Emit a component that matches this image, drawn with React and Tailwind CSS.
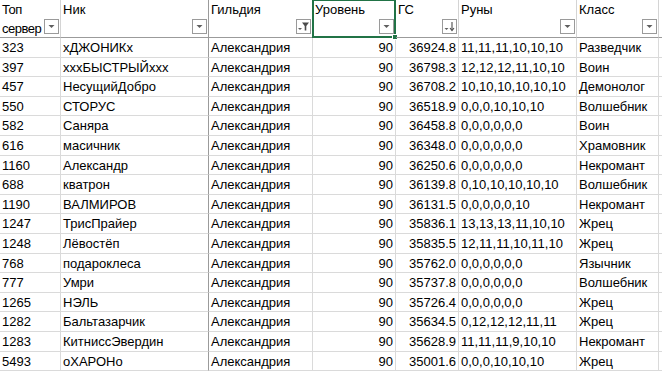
import React from 'react';

// строки таблицы
const rows = [
  ['323', 'хДЖОНИКх', '36924.8', '11,11,11,10,10,10', 'Разведчик'],
  ['397', 'хххБЫСТРЫЙххх', '36798.3', '12,12,12,11,10,10', 'Воин'],
  ['457', 'НесущийДобро', '36708.2', '10,10,10,10,10,10', 'Демонолог'],
  ['550', 'СТОРУС', '36518.9', '0,0,0,10,10,10', 'Волшебник'],
  ['582', 'Саняра', '36458.8', '0,0,0,0,0,0', 'Воин'],
  ['616', 'масичник', '36348.0', '0,0,0,0,0,0', 'Храмовник'],
  ['1160', 'Александр', '36250.6', '0,0,0,0,0,0', 'Некромант'],
  ['688', 'кватрон', '36139.8', '0,10,10,10,10,10', 'Волшебник'],
  ['1190', 'ВАЛМИРОВ', '36131.5', '0,0,0,0,0,10', 'Некромант'],
  ['1247', 'ТрисПрайер', '35836.1', '13,13,13,11,10,10', 'Жрец'],
  ['1248', 'Лёвостёп', '35835.5', '12,11,11,10,11,10', 'Жрец'],
  ['768', 'подароклеса', '35762.0', '0,0,0,0,0,0', 'Язычник'],
  ['777', 'Умри', '35737.8', '0,0,0,0,0,0', 'Волшебник'],
  ['1265', 'НЭЛЬ', '35726.4', '0,0,0,0,0,0', 'Жрец'],
  ['1282', 'Бальтазарчик', '35634.5', '0,12,12,12,11,11', 'Жрец'],
  ['1283', 'КитниссЭвердин', '35628.9', '11,11,11,9,10,10', 'Некромант'],
  ['5493', 'оХАРОНо', '35001.6', '0,0,0,10,10,10', 'Жрец'],
];

const FilterBtn = ({ kind = 'plain' }) => (
  <div className="absolute right-[1px] bottom-[3px] w-[15px] h-[15px] border border-[#9a9a9a] bg-white flex items-center justify-center">
    {kind === 'plain' && (
      <svg width="9" height="9" viewBox="0 0 9 9">
        <path d="M1.5 3 L7.5 3 L4.5 6 Z" fill="#5f5f5f" />
      </svg>
    )}
    {kind === 'filter' && (
      <svg width="13" height="13" viewBox="0 0 13 13">
        <path d="M1 8 L5 8 L3 10 Z" fill="#5f5f5f" />
        <path d="M5 2.5 L12 2.5 L9.3 6 L9.3 10.5 L7.7 10.5 L7.7 6 Z" fill="#4a4a4a" />
      </svg>
    )}
    {kind === 'sort' && (
      <svg width="13" height="13" viewBox="0 0 13 13">
        <path d="M1.5 8 L5.5 8 L3.5 10 Z" fill="#5f5f5f" />
        <path d="M9 2 L9 10" stroke="#4a4a4a" strokeWidth="1.1" />
        <path d="M7 8 L9 10.5 L11 8" stroke="#4a4a4a" strokeWidth="1.1" fill="none" />
      </svg>
    )}
  </div>
);

const Head = ({ children, kind, selected, dark, tight }) => (
  <div
    className={`relative h-[38px] border-b border-b-[#9b9b9b] border-r ${
      dark ? 'border-r-[#9b9b9b]' : 'border-r-[#d4d4d4]'
    } pl-[2px] pr-[17px] leading-[19px] ${tight ? 'tracking-[-0.5px]' : ''}`}
  >
    {children}
    {kind && <FilterBtn kind={kind} />}
    {selected && (
      <div className="absolute -left-[1px] -top-[1px] -right-[1px] -bottom-[1px] border-2 border-[#217346]">
        <div className="absolute -right-[4px] -bottom-[4px] w-[6px] h-[6px] bg-[#217346] border border-white" />
      </div>
    )}
  </div>
);

const Cell = ({ children, right, dark }) => (
  <div
    className={`h-[19.6px] leading-[19px] border-b border-b-[#dadada] border-r ${
      dark ? 'border-r-[#9b9b9b]' : 'border-r-[#dadada]'
    } ${right ? 'text-right pr-[2px]' : 'pl-[2px]'} whitespace-nowrap overflow-hidden`}
  >
    {children}
  </div>
);

export default function App() {
  return (
    <div
      className="w-[662px] h-[379px] overflow-hidden bg-white text-black text-[13px]"
      style={{ fontFamily: '"Liberation Sans", Arial, sans-serif' }}
    >
      <div className="grid grid-cols-[61px_148px_104px_83px_63px_118px_82px_1fr]">
        <Head kind="plain" tight>Топ сервер</Head>
        <Head kind="plain" dark>Ник</Head>
        <Head kind="filter">Гильдия</Head>
        <Head kind="plain" selected>Уровень</Head>
        <Head kind="sort">ГС</Head>
        <Head kind="plain">Руны</Head>
        <Head kind="plain">Класс</Head>
        <Head />
        {rows.map((r) => (
          <React.Fragment key={r[0]}>
            <Cell>{r[0]}</Cell>
            <Cell dark>{r[1]}</Cell>
            <Cell>Александрия</Cell>
            <Cell right>90</Cell>
            <Cell right>{r[2]}</Cell>
            <Cell>{r[3]}</Cell>
            <Cell>{r[4]}</Cell>
            <Cell />
          </React.Fragment>
        ))}
      </div>
    </div>
  );
}
